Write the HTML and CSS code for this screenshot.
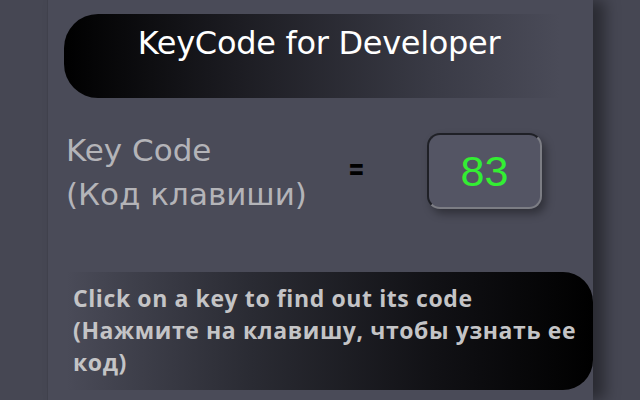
FILE: index.html
```html
<!DOCTYPE html>
<html lang="en">
<head>
    <meta charset="UTF-8">
    <meta name="viewport" content="width=device-width, initial-scale=1.0">
    <title>KeyCode for Developer</title>
    <link rel="stylesheet" href="styles.css">
</head>
<body>
    <div class="panel">
        <div class="title-bar">
            <h1>KeyCode for Developer</h1>
        </div>

        <div class="code-row">
            <div class="code-label">Key Code<br>(Код клавиши)</div>
            <div class="code-eq"><span>=</span></div>
            <div class="code-box" id="keyCode">83</div>
        </div>

        <div class="hint">
            Click on a key to find out its code<br>
            (Нажмите на клавишу, чтобы узнать ее код)
        </div>
    </div>
</body>
</html>
```

FILE: styles.css
```css
body {
    margin: 0;
    padding: 0;
    background: #464753;
    overflow: hidden;
}

.panel {
    width: 546px;
    height: 400px;
    margin: 0 auto;
    padding-top: 14px;
    box-sizing: border-box;
    background: #4a4b58;
    border-left: 1px solid #40414c;
    box-shadow: 12px 0 14px rgba(0,0,0,0.4);
}

.title-bar {
    height: 84px;
    margin: 0 33px 0 16px;
    border-radius: 34px 0 0 34px;
    background: linear-gradient(to right, #000 0%, #1c1c22 35%, #3a3b46 75%, #4a4b58 100%);
}

.title-bar h1 {
    margin: 0;
    padding: 10px 0 0 14px;
    text-align: center;
    color: #fff;
    font-family: "Comic Sans MS", "DejaVu Sans", sans-serif;
    font-size: 32px;
    font-weight: normal;
    letter-spacing: -0.3px;
}

.code-row {
    display: flex;
    align-items: center;
    margin-top: 30px;
    padding-left: 18px;
}

.code-label {
    width: 282px;
    color: #b4b4b8;
    font-family: "Comic Sans MS", "DejaVu Sans", sans-serif;
    font-size: 31px;
    line-height: 44px;
    white-space: nowrap;
}

.code-eq {
    width: 79px;
    margin-top: -6px;
    color: #000;
    font-family: "DejaVu Sans", sans-serif;
    font-size: 20px;
    font-weight: bold;
}

.code-eq span {
    display: inline-block;
    transform: scaleY(1.6);
}

.code-box {
    width: 115px;
    height: 76px;
    margin-top: -2px;
    box-sizing: border-box;
    border: 2px solid;
    border-color: #1f2026 #7c7d84 #7c7d84 #1f2026;
    border-radius: 13px;
    background: #545564;
    box-shadow: 4px 5px 8px rgba(0,0,0,0.35);
    color: #33ee33;
    font-family: "Liberation Sans", sans-serif;
    font-size: 43px;
    line-height: 72px;
    text-align: center;
}

.hint {
    height: 118px;
    margin: 56px 0 0 19px;
    padding: 10px 15px 0 6px;
    box-sizing: border-box;
    border-radius: 0 30px 30px 0;
    background: linear-gradient(to right, #4a4b58 0%, #2a2b33 35%, #111115 70%, #000 100%);
    color: #c4c4c6;
    font-family: "Open Sans", sans-serif;
    font-size: 23px;
    font-weight: bold;
    letter-spacing: 0.6px;
    line-height: 32px;
}
```
